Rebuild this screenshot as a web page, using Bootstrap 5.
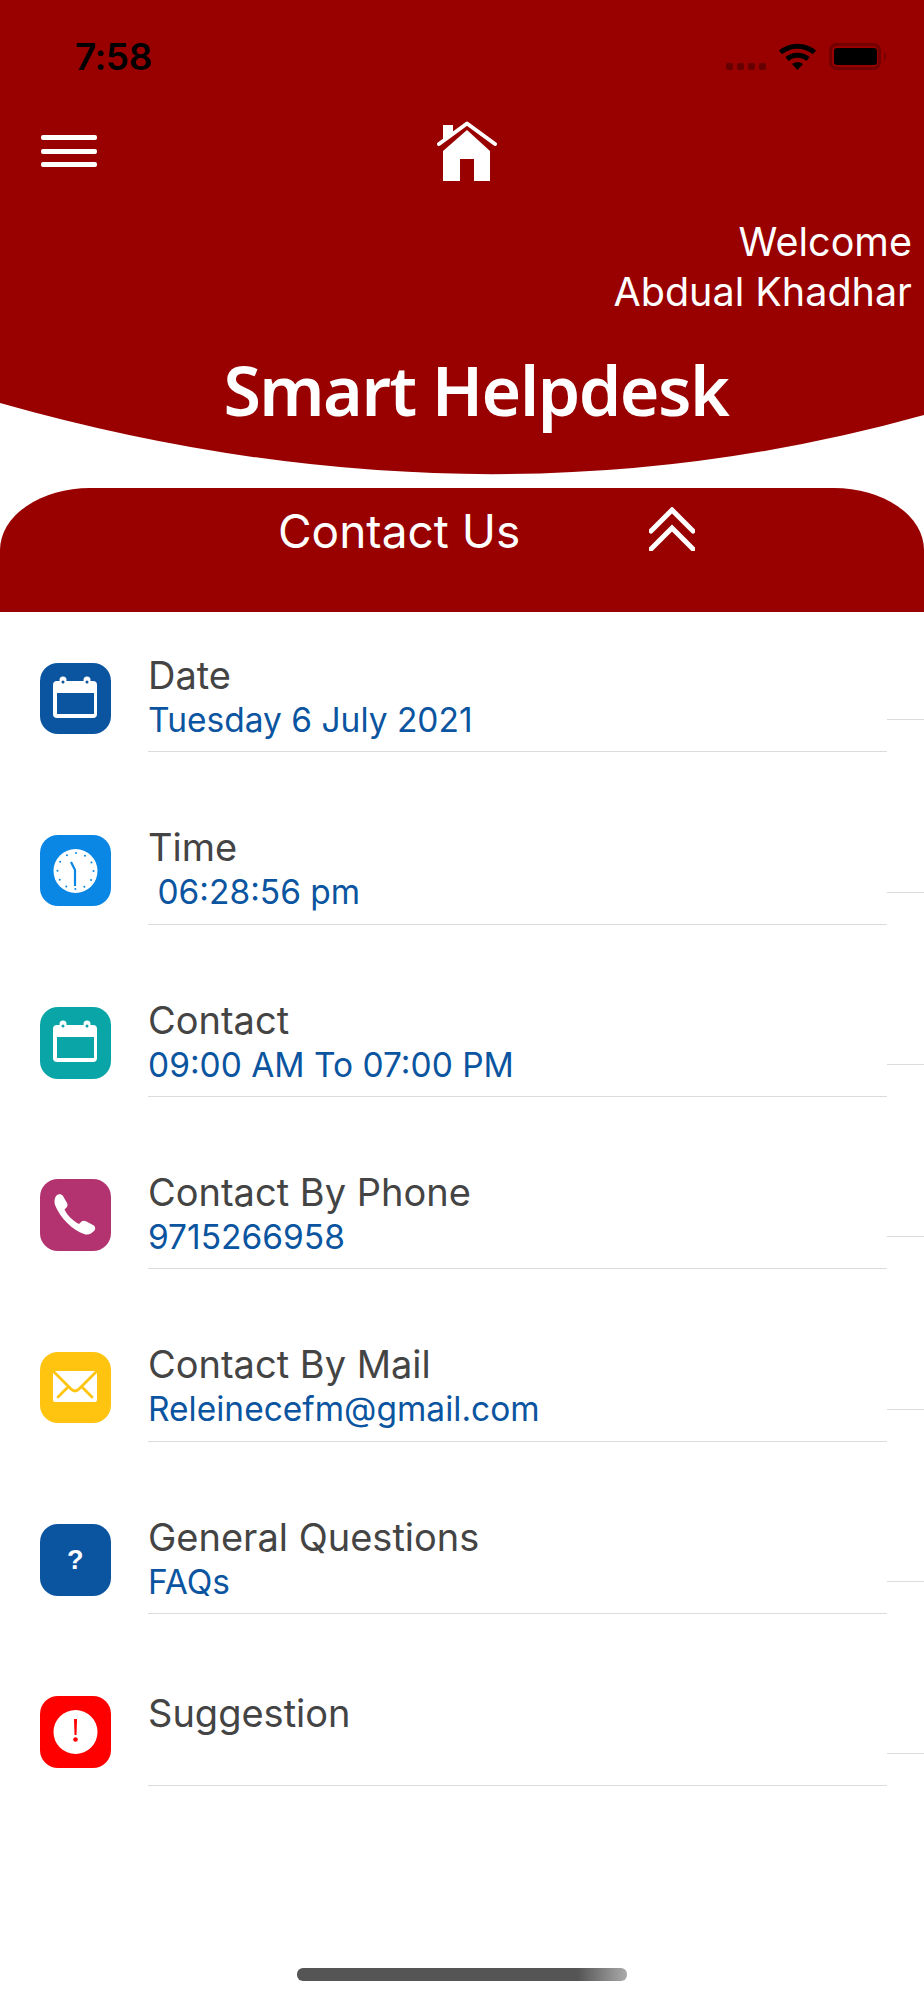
<!DOCTYPE html>
<html lang="en">
<head>
    <meta charset="UTF-8">
    <meta name="viewport" content="width=device-width, initial-scale=1">
    <title>Contact Us</title>
    <link href="https://cdn.jsdelivr.net/npm/bootstrap@5.3.0/dist/css/bootstrap.min.css" rel="stylesheet">
    <style>
        body {
            background-color: #fff;
            font-family: Inter, "Liberation Sans", sans-serif;
        }
        .hero {
            height: 475px;
            background-color: #990000;
            clip-path: path("M0 0H924V415Q480 539 0 403Z");
        }
        .status-row {
            height: 121px;
            padding: 43px 35px 0 75px;
        }
        .status-time {
            font-size: 37px;
            font-weight: 600;
            line-height: 27px;
            letter-spacing: -.5px;
            color: #000;
        }
        .signal-dots {
            height: 27px;
        }
        .signal-dot {
            width: 7px;
            height: 7px;
            border-radius: 2px;
            background-color: #660000;
        }
        .status-gap {
            margin-left: 13px;
        }
        .nav-row {
            height: 96px;
            padding-left: 41px;
        }
        .burger {
            width: 56px;
            margin: 14px 340px 0 0;
        }
        .burger span {
            display: block;
            height: 5px;
            margin-bottom: 8.5px;
            border-radius: 2px;
            background-color: #fff;
        }
        .welcome {
            padding-right: 12px;
            font-size: 39.5px;
            line-height: 50px;
            color: #fff;
        }
        .logo-text {
            display: inline-block;
            margin: 37px 0 0 28px;
            font-family: "Noto Sans", sans-serif;
            font-size: 68px;
            font-style: normal;
            font-weight: 600;
            line-height: 72px;
            letter-spacing: -1.5px;
            color: #fff;
        }
        .contact-bar {
            height: 124px;
            margin-top: 13px;
            padding: 18px 0 0 278px;
            background-color: #990000;
            border-radius: 90px 90px 0 0 / 62px 62px 0 0;
            font-size: 46px;
            line-height: 50px;
            color: #fff;
        }
        .contact-bar svg {
            margin: 1px 0 0 129px;
        }
        .info-row {
            height: 172.33px;
            padding-left: 39.5px;
        }
        .tile {
            width: 71.5px;
            height: 71.5px;
            margin: 50.5px 37px 0 0;
            border-radius: 18px;
        }
        .tile-navy { background-color: #0b55a0; color: #0b55a0; }
        .tile-sky { background-color: #0a86e4; color: #0a86e4; }
        .tile-teal { background-color: #0aa5a7; color: #0aa5a7; }
        .tile-plum { background-color: #b2336f; color: #b2336f; }
        .tile-amber { background-color: #ffc40f; color: #ffc40f; }
        .tile-red { background-color: #ff0000; color: #ff0000; }
        .tile-mark {
            font-family: "Liberation Sans", sans-serif;
            font-size: 27px;
            font-weight: 700;
            color: #fff;
        }
        .info-text {
            width: 739px;
            height: 140.3px;
            padding-top: 40px;
            border-bottom: 1.5px solid #dcdcdc;
        }
        .info-title {
            font-size: 38px;
            line-height: 46px;
            color: #444;
        }
        .info-title-low {
            padding-top: 4px;
        }
        .info-value {
            font-size: 33.5px;
            line-height: 44px;
            color: #0b55a0;
        }
        .info-stub {
            width: 37px;
            height: 108.3px;
            border-bottom: 1.5px solid #dcdcdc;
        }
        .home-bar {
            width: 330px;
            height: 12.5px;
            margin: 150px auto 0;
            border-radius: 6px;
            background-image: linear-gradient(to right, #555 85%, #aaa);
        }
    </style>
</head>
<body>
<header class="hero">
    <div class="status-row d-flex justify-content-between">
        <span class="status-time">7:58</span>
        <div class="d-flex">
            <div class="signal-dots d-flex gap-1 align-items-end">
                <span class="signal-dot"></span><span class="signal-dot"></span><span class="signal-dot"></span><span class="signal-dot"></span>
            </div>
            <svg class="status-gap" width="37" height="27" viewBox="0 0 37 27" fill="none" stroke="#000" stroke-width="5">
                <path d="M1.5 9.5C11 1 26 1 35.5 9.5"/>
                <path d="M8 16C14 11 23 11 29 16"/>
                <path d="M13 21L18.5 27L24 21C21 18.5 16 18.5 13 21Z" fill="#000" stroke="none"/>
            </svg>
            <svg class="status-gap" width="60" height="27" viewBox="0 0 60 27">
                <rect x="1.5" y="1.5" width="49" height="24" rx="6" fill="none" stroke="#730000" stroke-width="3"/>
                <rect x="5" y="5" width="43" height="17" rx="3" fill="#000"/>
                <path d="M55 9C57.5 10 57.5 17 55 18Z" fill="#730000"/>
            </svg>
        </div>
    </div>
    <div class="nav-row d-flex align-items-start">
        <div class="burger"><span></span><span></span><span></span></div>
        <svg width="60" height="60" viewBox="0 0 60 60" fill="#fff">
            <path d="M6 4H16V11L6 19Z"/>
            <path d="M6 30L30 9L53 30V60H37V38H23V60H6Z"/>
            <path d="M2 23L30 2.500L58 23" fill="none" stroke="#fff" stroke-width="4" stroke-linecap="round" stroke-linejoin="round"/>
        </svg>
    </div>
    <div class="welcome text-end">Welcome<br>Abdual Khadhar</div>
    <div class="text-center"><span class="logo-text">Smart Helpdesk</span></div>
</header>

<div class="contact-bar d-flex align-items-start">
    <span>Contact Us</span>
    <svg width="46" height="44" viewBox="0 0 46 44" fill="none" stroke="#fff" stroke-width="5" stroke-linecap="round">
        <path d="M2 24L23 3L44 24"/>
        <path d="M2 42L23 21L44 42"/>
    </svg>
</div>

<main>
    <div class="info-row d-flex">
        <div class="tile tile-navy">
            <svg width="72" height="72" viewBox="0 0 72 72">
                <rect x="13" y="18" width="44" height="37" rx="4" fill="#fff"/>
                <rect x="17" y="30" width="37" height="21" fill="currentColor"/>
                <circle cx="23" cy="17" r="3.500" fill="#fff"/><circle cx="47" cy="17" r="3.500" fill="#fff"/>
                <circle cx="23" cy="19" r="1.500" fill="currentColor"/><circle cx="47" cy="19" r="1.500" fill="currentColor"/>
            </svg>
        </div>
        <div class="info-text">
            <div class="info-title">Date</div>
            <div class="info-value">Tuesday 6 July 2021</div>
        </div>
        <div class="info-stub"></div>
    </div>
    <div class="info-row d-flex">
        <div class="tile tile-sky">
            <svg width="72" height="72" viewBox="0 0 72 72">
                <circle cx="35.500" cy="36" r="22" fill="#fff"/>
                <circle cx="35.500" cy="36" r="18" fill="none" stroke="currentColor" stroke-width="2" stroke-linecap="round" stroke-dasharray="0 9.425"/>
                <path d="M31 27L35 35V51" fill="none" stroke="currentColor" stroke-width="2.200"/>
            </svg>
        </div>
        <div class="info-text">
            <div class="info-title">Time</div>
            <div class="info-value">&nbsp;06:28:56 pm</div>
        </div>
        <div class="info-stub"></div>
    </div>
    <div class="info-row d-flex">
        <div class="tile tile-teal">
            <svg width="72" height="72" viewBox="0 0 72 72">
                <rect x="13" y="18" width="44" height="37" rx="4" fill="#fff"/>
                <rect x="17" y="30" width="37" height="21" fill="currentColor"/>
                <circle cx="23" cy="17" r="3.500" fill="#fff"/><circle cx="47" cy="17" r="3.500" fill="#fff"/>
                <circle cx="23" cy="19" r="1.500" fill="currentColor"/><circle cx="47" cy="19" r="1.500" fill="currentColor"/>
            </svg>
        </div>
        <div class="info-text">
            <div class="info-title">Contact</div>
            <div class="info-value">09:00 AM To 07:00 PM</div>
        </div>
        <div class="info-stub"></div>
    </div>
    <div class="info-row d-flex">
        <div class="tile tile-plum">
            <svg width="72" height="72" viewBox="0 0 72 72" fill="#fff">
                <path d="M16 17C18 14.500 21.500 14.500 23 17L27 24C28 26 27.500 28 26 29L24.500 30.500C27 36 33 42 39 45L41 43C42.500 41.500 44.500 41.500 46.500 42.500L53 46C55.500 47.500 56 50 54 52L51.500 54C49.500 55.500 47 56 44 55C33 51.500 20 39 15 26C14 22.500 14.500 19.500 16 17Z"/>
            </svg>
        </div>
        <div class="info-text">
            <div class="info-title">Contact By Phone</div>
            <div class="info-value">9715266958</div>
        </div>
        <div class="info-stub"></div>
    </div>
    <div class="info-row d-flex">
        <div class="tile tile-amber">
            <svg width="72" height="72" viewBox="0 0 72 72">
                <rect x="13" y="19" width="44" height="31" rx="2" fill="#fff"/>
                <path d="M14 20L31 37C33.500 39.500 36.500 39.500 39 37L56 20M18 45L28 35M52 45L42 35" fill="none" stroke="currentColor" stroke-width="2.800" stroke-linecap="round"/>
            </svg>
        </div>
        <div class="info-text">
            <div class="info-title">Contact By Mail</div>
            <div class="info-value">Releinecefm@gmail.com</div>
        </div>
        <div class="info-stub"></div>
    </div>
    <div class="info-row d-flex">
        <div class="tile tile-navy tile-mark d-flex align-items-center justify-content-center">?</div>
        <div class="info-text">
            <div class="info-title">General Questions</div>
            <div class="info-value">FAQs</div>
        </div>
        <div class="info-stub"></div>
    </div>
    <div class="info-row d-flex">
        <div class="tile tile-red">
            <svg width="72" height="72" viewBox="0 0 72 72">
                <circle cx="35.500" cy="36" r="22" fill="#fff"/>
                <path d="M34 23H37L36.500 39H34.500Z" fill="currentColor"/>
                <circle cx="35.500" cy="43.500" r="2.300" fill="currentColor"/>
            </svg>
        </div>
        <div class="info-text">
            <div class="info-title info-title-low">Suggestion</div>
        </div>
        <div class="info-stub"></div>
    </div>
</main>
<div class="home-bar"></div>
<script src="https://cdn.jsdelivr.net/npm/bootstrap@5.3.0/dist/js/bootstrap.bundle.min.js"></script>
</body>
</html>
